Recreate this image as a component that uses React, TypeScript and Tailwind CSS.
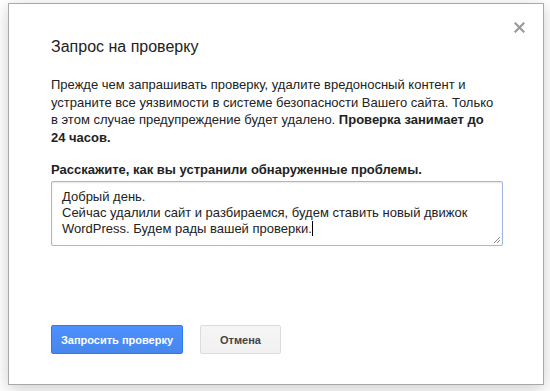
export default function App() {
  return (
    <div className="w-[550px] h-[391px] bg-white pt-[3px] pl-[8px] font-['Liberation_Sans',Arial,sans-serif] text-[#222]">
      <div className="relative w-[536px] h-[382px] bg-white border border-[#a9a9a9] shadow-[0_4px_16px_rgba(0,0,0,0.2)] pl-[42px] pr-[41px] pt-[33px]">
        <button className="absolute right-[18px] top-[17px] w-[12px] h-[12px] flex items-center justify-center">
          <svg width="11" height="11" viewBox="0 0 11 11">
            <path d="M1.5 1.5 L9.5 9.5 M9.5 1.5 L1.5 9.5" stroke="#9a9a9a" strokeWidth="2.2" strokeLinecap="square" />
          </svg>
        </button>
        <h1 className="text-[16px] leading-[20px] font-normal">Запрос на проверку</h1>
        <p className="mt-[19px] text-[13px] leading-[17.6px]">
          Прежде чем запрашивать проверку, удалите вредоносный контент и устраните все уязвимости в системе безопасности Вашего сайта. Только в этом случае предупреждение будет удалено. <b>Проверка занимает до 24&nbsp;часов.</b>
        </p>
        <div className="mt-[15px] text-[13px] leading-[18px] font-bold">Расскажите, как вы устранили обнаруженные проблемы.</div>
        <div className="relative mt-[2px] w-[452px] h-[65px] border border-[#9db8e6] rounded-[2px] shadow-[inset_0_1px_2px_rgba(0,0,0,0.1)] pl-[10px] pt-[7px] text-[13px] leading-[16px] text-[#222]">
          Добрый день.<br />
          Сейчас удалили сайт и разбираемся, будем ставить новый движок<br />
          WordPress. Будем рады вашей проверки.<span className="inline-block w-[1px] h-[15px] bg-black align-[-3px]"></span>
          <svg className="absolute right-[1px] bottom-[1px]" width="9" height="9" viewBox="0 0 9 9">
            <path d="M8 2 L2 8 M8 5 L5 8" stroke="#8a8a8a" strokeWidth="1" />
          </svg>
        </div>
        <div className="mt-[79px] flex gap-[17px]">
          <button className="w-[132px] h-[29px] rounded-[2px] border border-[#3079ed] bg-gradient-to-b from-[#4d90fe] to-[#4787ed] text-white text-[11px] font-bold">
            Запросить проверку
          </button>
          <button className="w-[81px] h-[29px] rounded-[2px] border border-[#dcdcdc] bg-gradient-to-b from-[#f5f5f5] to-[#f1f1f1] text-[#444] text-[11px] font-bold">
            Отмена
          </button>
        </div>
      </div>
    </div>
  );
}
